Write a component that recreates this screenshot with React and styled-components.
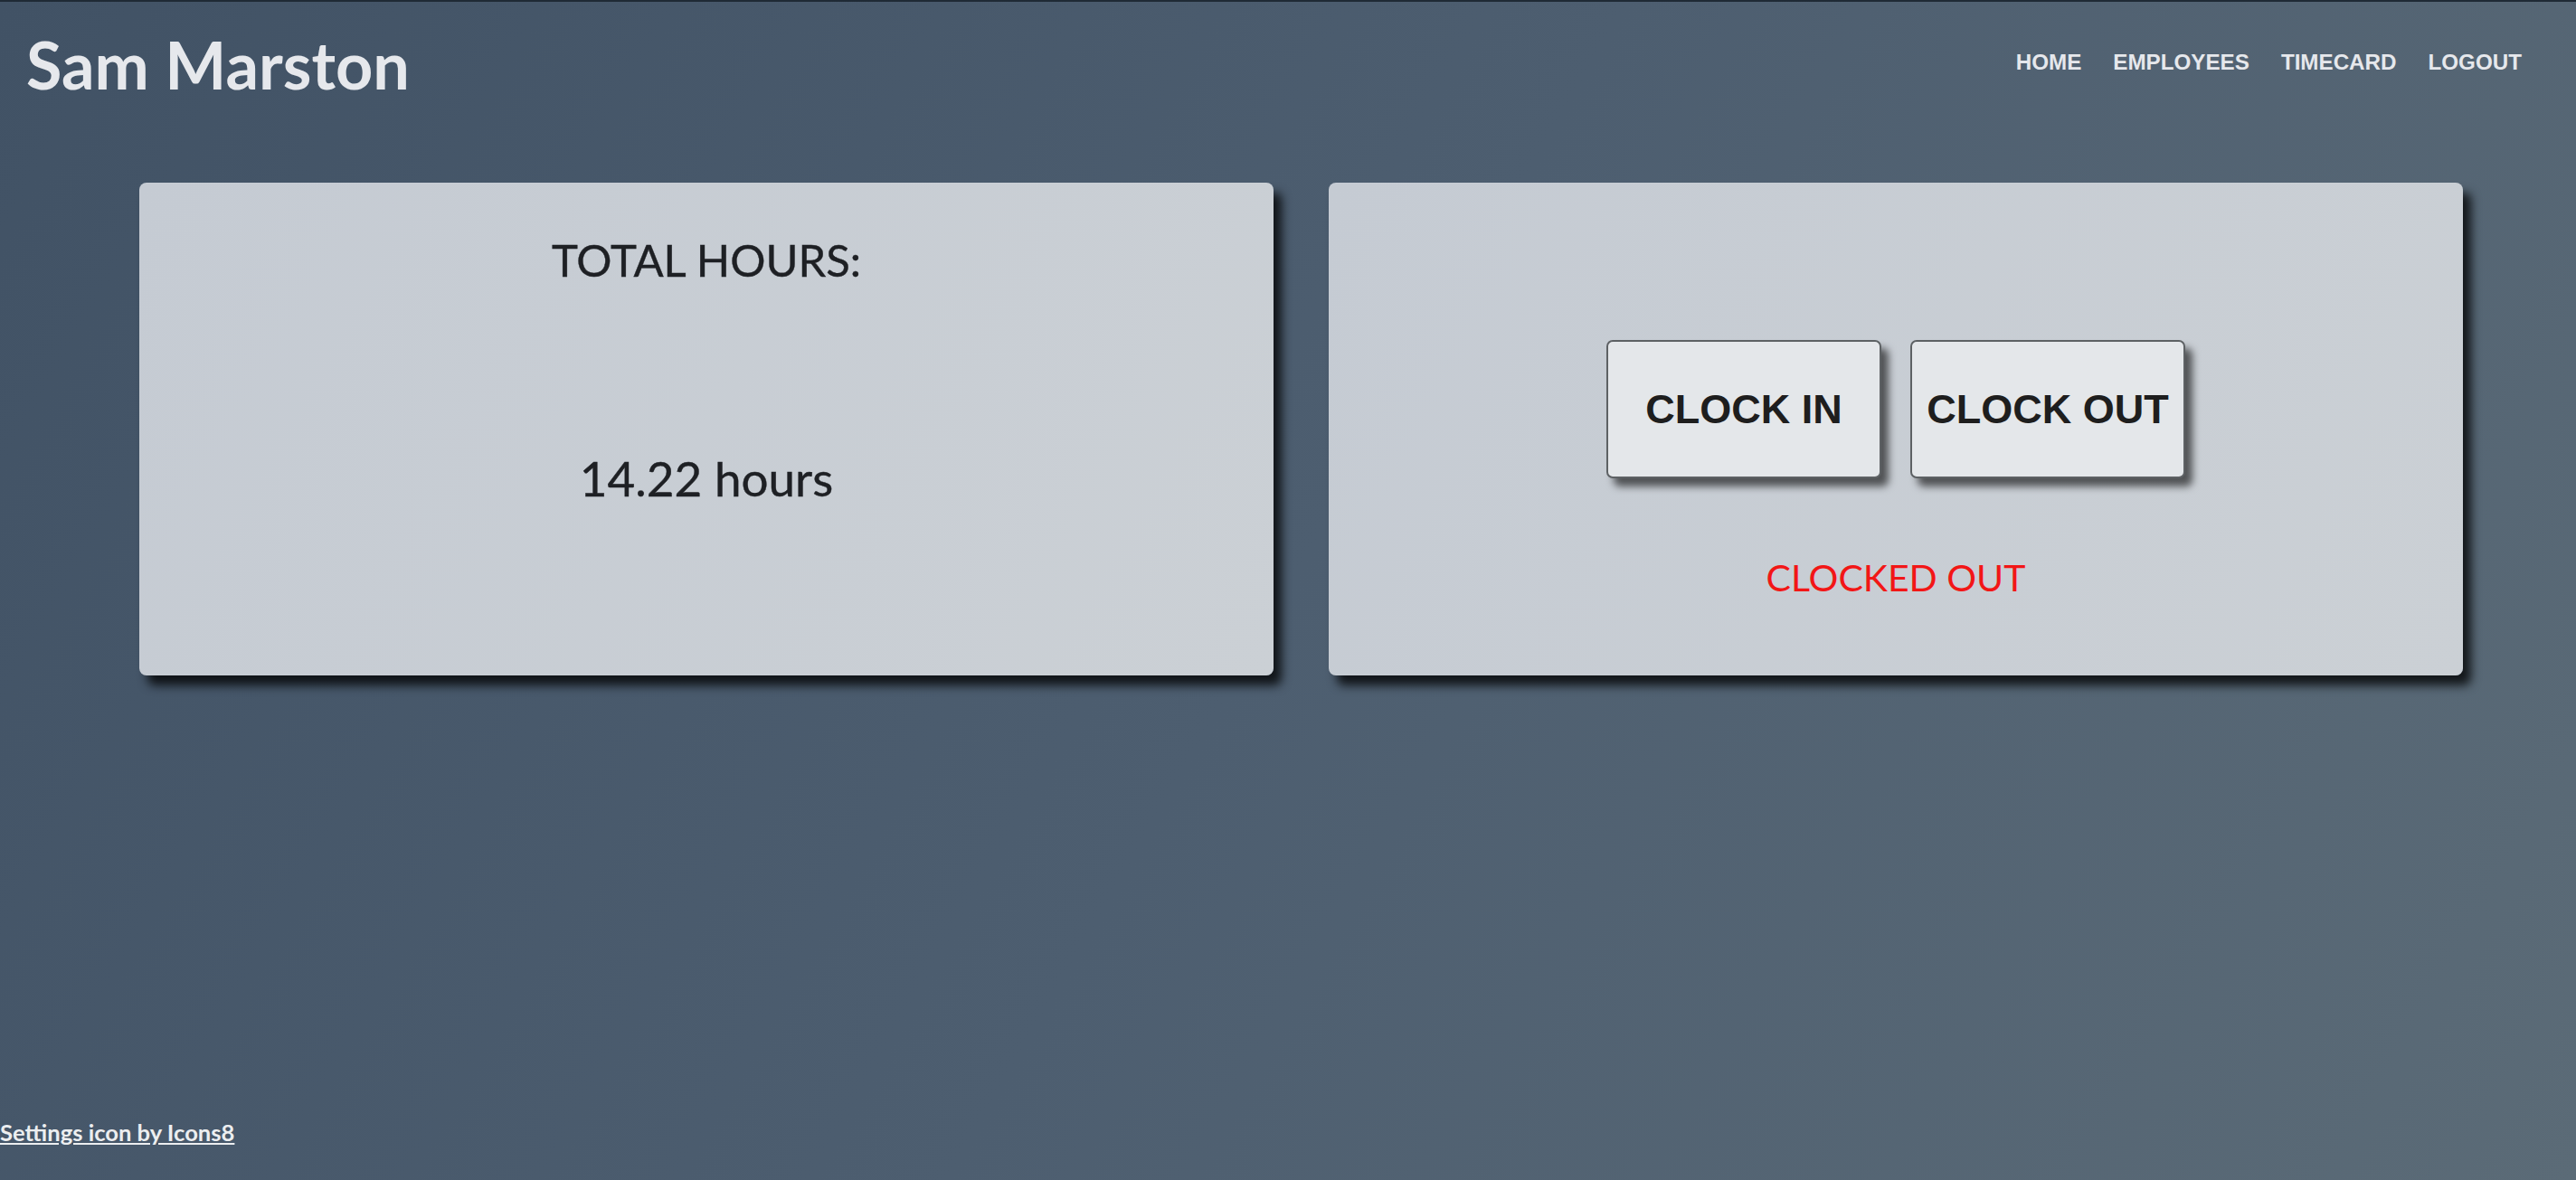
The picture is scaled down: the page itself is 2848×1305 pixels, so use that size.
import React from "react";
import styled, { createGlobalStyle } from "styled-components";

// ===== 타임카드 대시보드 =====

const GlobalStyle = createGlobalStyle`
  html, body {
    margin: 0;
    padding: 0;
  }
  body {
    font-family: "Lato", "Liberation Sans", sans-serif;
  }
`;

function App() {
    const totalHours = 14.22;
    const clockedIn = false;

    return (
        <>
            <GlobalStyle />
            <Page>
                <Header>
                    <Name>Sam Marston</Name>
                    <Nav>
                        <NavLink href="#">HOME</NavLink>
                        <NavLink href="#">EMPLOYEES</NavLink>
                        <NavLink href="#">TIMECARD</NavLink>
                        <NavLink href="#">LOGOUT</NavLink>
                    </Nav>
                </Header>
                <Main>
                    <Card>
                        <CardTitle>TOTAL HOURS:</CardTitle>
                        <Hours>{totalHours} hours</Hours>
                    </Card>
                    <Card>
                        <ButtonRow>
                            <ClockButton>CLOCK IN</ClockButton>
                            <ClockButton>CLOCK OUT</ClockButton>
                        </ButtonRow>
                        <Status $in={clockedIn}>
                            {clockedIn ? "CLOCKED IN" : "CLOCKED OUT"}
                        </Status>
                    </Card>
                </Main>
                <Footer>
                    <Credit href="#">Settings icon by Icons8</Credit>
                </Footer>
            </Page>
        </>
    );
}

export default App;

const Page = styled.div`
  min-height: 100vh;
  box-sizing: border-box;
  display: flex;
  flex-direction: column;
  border-top: 2px solid #1f2a35;
  background: linear-gradient(120deg, #415265 0%, #4d5e70 50%, #5b6b77 100%);
`;
const Header = styled.header`
  height: 138px;
  display: flex;
  align-items: center;
  justify-content: space-between;
  padding: 0 60px 0 29px;
`;
const Name = styled.h1`
  margin: 0;
  font-family: "Lato", sans-serif;
  font-weight: 700;
  font-size: 72px;
  color: #e6e8ec;
`;
const Nav = styled.nav`
  display: flex;
  gap: 35px;
  margin-top: -4px;
`;
const NavLink = styled.a`
  font-family: "Liberation Sans", Arial, sans-serif;
  font-weight: 700;
  font-size: 24.2px;
  color: #e6e8ec;
  text-decoration: none;
`;
const Main = styled.main`
  display: flex;
  gap: 61px;
  padding: 62px 0 0 154px;
`;
const Card = styled.section`
  width: 1254px;
  height: 545px;
  box-sizing: border-box;
  border-radius: 8px;
  display: flex;
  flex-direction: column;
  align-items: center;
  background: linear-gradient(120deg, #c5cbd3 0%, #cbd0d5 100%);
  box-shadow: 9px 11px 11px rgba(0, 0, 0, 0.78);
`;
const CardTitle = styled.h2`
  margin: 55px 0 0;
  font-family: "Lato", sans-serif;
  font-weight: 400;
  font-size: 49px;
  line-height: 60px;
  color: #1e2024;
  -webkit-text-stroke: 0.4px #1e2024;
`;
const Hours = styled.div`
  margin-top: 182px;
  font-family: "Lato", sans-serif;
  font-size: 53px;
  line-height: 60px;
  color: #1e2024;
  -webkit-text-stroke: 0.4px #1e2024;
`;
const ButtonRow = styled.div`
  display: flex;
  gap: 32px;
  margin-top: 174px;
`;
const ClockButton = styled.button`
  width: 304px;
  height: 153px;
  border: 2px solid #5d6164;
  border-radius: 7px;
  background: #e4e7ea;
  font-family: "Liberation Sans", Arial, sans-serif;
  font-weight: 700;
  font-size: 45px;
  color: #1e1e1e;
  padding: 0;
  cursor: pointer;
  box-shadow: 8px 9px 8px rgba(0, 0, 0, 0.6);
`;
const Status = styled.div`
  margin-top: 86px;
  font-family: "Lato", sans-serif;
  font-size: 41px;
  line-height: 48px;
  color: ${(props) => (props.$in ? "#1a9a3a" : "#f21616")};
`;
const Footer = styled.footer`
  margin-top: auto;
  padding-bottom: 38px;
`;
const Credit = styled.a`
  font-family: "Lato", sans-serif;
  font-weight: 700;
  font-size: 25.6px;
  color: #eceef0;
  text-decoration: underline;
`;
